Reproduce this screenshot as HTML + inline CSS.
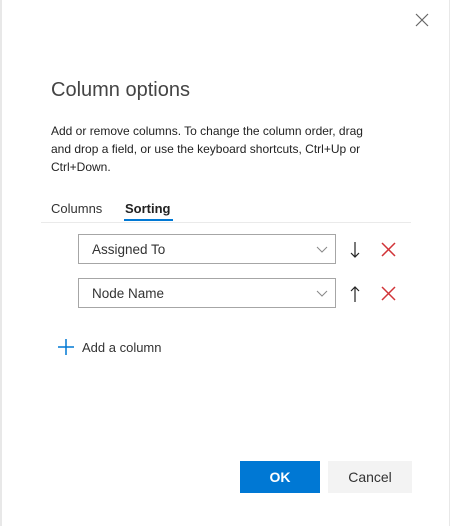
<!DOCTYPE html>
<html><head><style>
body{margin:0;width:450px;height:526px;background:#fff;font-family:"Liberation Sans",sans-serif;position:relative;overflow:hidden;color:#333}
.a{position:absolute}
.lb{left:0;top:0;width:2px;height:526px;background:#e8e8e8}
.rb{left:449px;top:0;width:1px;height:526px;background:#e8e8e8}
.dd{border:1px solid #a6a6a6;width:258px;height:30px;left:78px;box-sizing:border-box;font-size:13.5px;line-height:30px;padding-left:13px;color:#333}
</style></head><body>
<div class="a lb"></div><div class="a rb"></div>
<svg class="a" style="left:415px;top:13px" width="14" height="14"><path d="M1 1L13 13M13 1L1 13" stroke="#666" stroke-width="1.2"/></svg>
<div class="a" style="left:51px;top:79px;font-size:20px;color:#444">Column options</div>
<div class="a" style="left:51px;top:122px;font-size:12px;line-height:18px;white-space:nowrap;color:#222">Add or remove columns. To change the column order, drag<br>and drop a field, or use the keyboard shortcuts, Ctrl+Up or<br>Ctrl+Down.</div>
<div class="a" style="left:51px;top:201px;font-size:13px;color:#333">Columns</div>
<div class="a" style="left:125px;top:201px;font-size:13px;font-weight:bold;color:#222">Sorting</div>
<div class="a" style="left:124px;top:219px;width:49px;height:2px;background:#0078d4"></div>
<div class="a" style="left:41px;top:222px;width:370px;height:1px;background:#eaeaea"></div>
<div class="a dd" style="top:234px">Assigned To</div>
<div class="a dd" style="top:278px">Node Name</div>
<svg class="a" style="left:316px;top:246px" width="12" height="8"><path d="M1 1L6 6L11 1" stroke="#888" fill="none"/></svg>
<svg class="a" style="left:316px;top:290px" width="12" height="8"><path d="M1 1L6 6L11 1" stroke="#888" fill="none"/></svg>
<svg class="a" style="left:349px;top:241px" width="12" height="18"><path d="M6 1V16M2 12L6 16L10 12" stroke="#222" fill="none" stroke-width="1.2"/></svg>
<svg class="a" style="left:349px;top:285px" width="12" height="18"><path d="M6 2V17M2 6L6 2L10 6" stroke="#222" fill="none" stroke-width="1.2"/></svg>
<svg class="a" style="left:381px;top:242px" width="15" height="15"><path d="M1 1L14 14M14 1L1 14" stroke="#d13438" stroke-width="1.5"/></svg>
<svg class="a" style="left:381px;top:286px" width="15" height="15"><path d="M1 1L14 14M14 1L1 14" stroke="#d13438" stroke-width="1.5"/></svg>
<svg class="a" style="left:58px;top:339px" width="16" height="16"><path d="M8 0V16M0 8H16" stroke="#0078d4" stroke-width="1.5"/></svg>
<div class="a" style="left:82px;top:340px;font-size:13px;color:#333">Add a column</div>
<div class="a" style="left:240px;top:461px;width:80px;height:32px;background:#0078d4;color:#fff;font-weight:bold;font-size:14px;line-height:32px;text-align:center">OK</div>
<div class="a" style="left:328px;top:461px;width:84px;height:32px;background:#f3f3f3;color:#333;font-size:14px;line-height:32px;text-align:center">Cancel</div>
</body></html>
